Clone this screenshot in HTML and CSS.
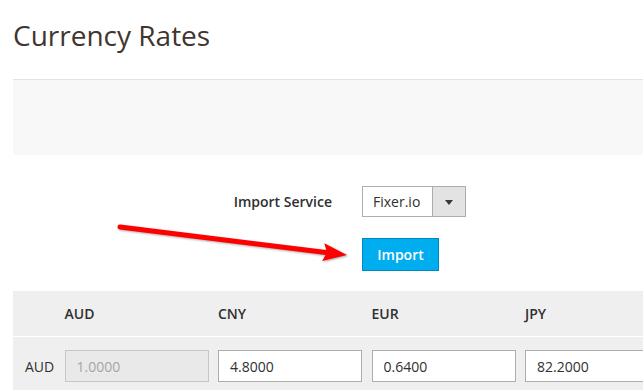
FILE: index.html
```html
<!DOCTYPE html>
<html lang="en">
<head>
  <meta charset="UTF-8" />
  <meta name="viewport" content="width=device-width, initial-scale=1.0" />
  <title>Currency Rates</title>
  <link rel="stylesheet" href="styles.css">
</head>
<body>
  <div class="page">
    <h1 class="page-title">Currency Rates</h1>

    <!-- Actions bar -->
    <div class="page-actions"></div>

    <!-- Import form -->
    <div class="import-form">
      <label class="form-label" for="service">Import Service</label>
      <div class="select">
        <span class="select-value" id="service">Fixer.io</span>
        <span class="select-toggle"><span class="caret"></span></span>
      </div>
      <button class="btn-import">Import</button>
    </div>

    <!-- Rates grid -->
    <div class="rates">
      <div class="rates-head">
        <span></span>
        <span>AUD</span>
        <span>CNY</span>
        <span>EUR</span>
        <span>JPY</span>
      </div>
      <div class="rates-row">
        <span class="row-label">AUD</span>
        <input class="rate-input" type="text" value="1.0000" disabled />
        <input class="rate-input" type="text" value="4.8000" />
        <input class="rate-input" type="text" value="0.6400" />
        <input class="rate-input" type="text" value="82.2000" />
      </div>
    </div>

    <!-- Annotation arrow -->
    <svg class="arrow" width="643" height="390" viewBox="0 0 643 390">
      <line x1="120" y1="227" x2="328" y2="252.7" stroke="#f00" stroke-width="5" stroke-linecap="round" />
      <polygon points="347,255 324.3,243.2 327,252.6 322.1,261" fill="#f00" />
    </svg>
  </div>
</body>
</html>
```

FILE: styles.css
```css
/* Reset & Body */
* { box-sizing: border-box; }
html, body { margin: 0; padding: 0; }
body {
  font-family: 'Open Sans', 'Noto Sans', sans-serif;
  font-size: 14px;
  color: #303030;
  background: #fff;
  overflow: hidden;
}

.page { position: relative; width: 643px; height: 390px; overflow: hidden; }

/* Title */
.page-title {
  margin: 0;
  padding: 18px 13px 0;
  font-size: 28px;
  line-height: 34px;
  font-weight: 400;
  color: #41362f;
}

/* Actions bar */
.page-actions {
  margin: 27px 0 0 13px;
  height: 76px;
  background: #f8f8f8;
  border-top: 1px solid #e3e3e3;
}

/* Import form */
.import-form {
  display: grid;
  grid-template-columns: 332px auto;
  column-gap: 30px;
  row-gap: 21px;
  justify-items: start;
  align-items: center;
  margin-top: 31px;
}
.form-label {
  justify-self: end;
  font-weight: 600;
  line-height: 19px;
  color: #303030;
}
.select {
  display: flex;
  height: 31px;
  width: 104px;
  border: 1px solid #adadad;
  background: #fff;
}
.select-value {
  flex: 1;
  display: flex; align-items: center;
  padding-left: 10px;
  color: #303030;
}
.select-toggle {
  width: 33px;
  background: #e3e3e3;
  border-left: 1px solid #adadad;
  display: flex; align-items: center; justify-content: center;
}
.caret {
  width: 0; height: 0;
  border-left: 4px solid transparent;
  border-right: 4px solid transparent;
  border-top: 5px solid #41362f;
  margin-top: 1px;
}
.btn-import {
  grid-column: 2;
  height: 33px;
  width: 77px;
  padding: 0;
  font-family: inherit;
  font-size: 14px;
  font-weight: 600;
  color: #fff;
  background: #00adef;
  border: 1px solid #0087bd;
  cursor: pointer;
}

/* Rates grid */
.rates { margin: 20px 0 0 13px; background: #efefef; }
.rates-head,
.rates-row {
  display: grid;
  grid-template-columns: 30px repeat(4, 144px);
  column-gap: 9.5px;
  padding-left: 12px;
  align-items: center;
}
.rates-head {
  height: 46px;
  border-bottom: 1px solid #fff;
  font-weight: 600;
  color: #303030;
}
.rates-row { padding-top: 13px; padding-bottom: 13px; }
.row-label { color: #303030; }
.rate-input {
  height: 32px;
  width: 144px;
  padding: 0 11px;
  font-family: inherit;
  font-size: 14px;
  color: #303030;
  background: #fff;
  border: 1px solid #adadad;
  border-radius: 0;
  outline: none;
}
.rate-input:disabled {
  background: #e9e9e9;
  border-color: #c6c6c6;
  color: #a6a6a6;
}

/* Annotation */
.arrow {
  position: absolute;
  top: 0; left: 0;
  pointer-events: none;
  filter: drop-shadow(1px 1px 1px rgba(0,0,0,0.35));
}
```
